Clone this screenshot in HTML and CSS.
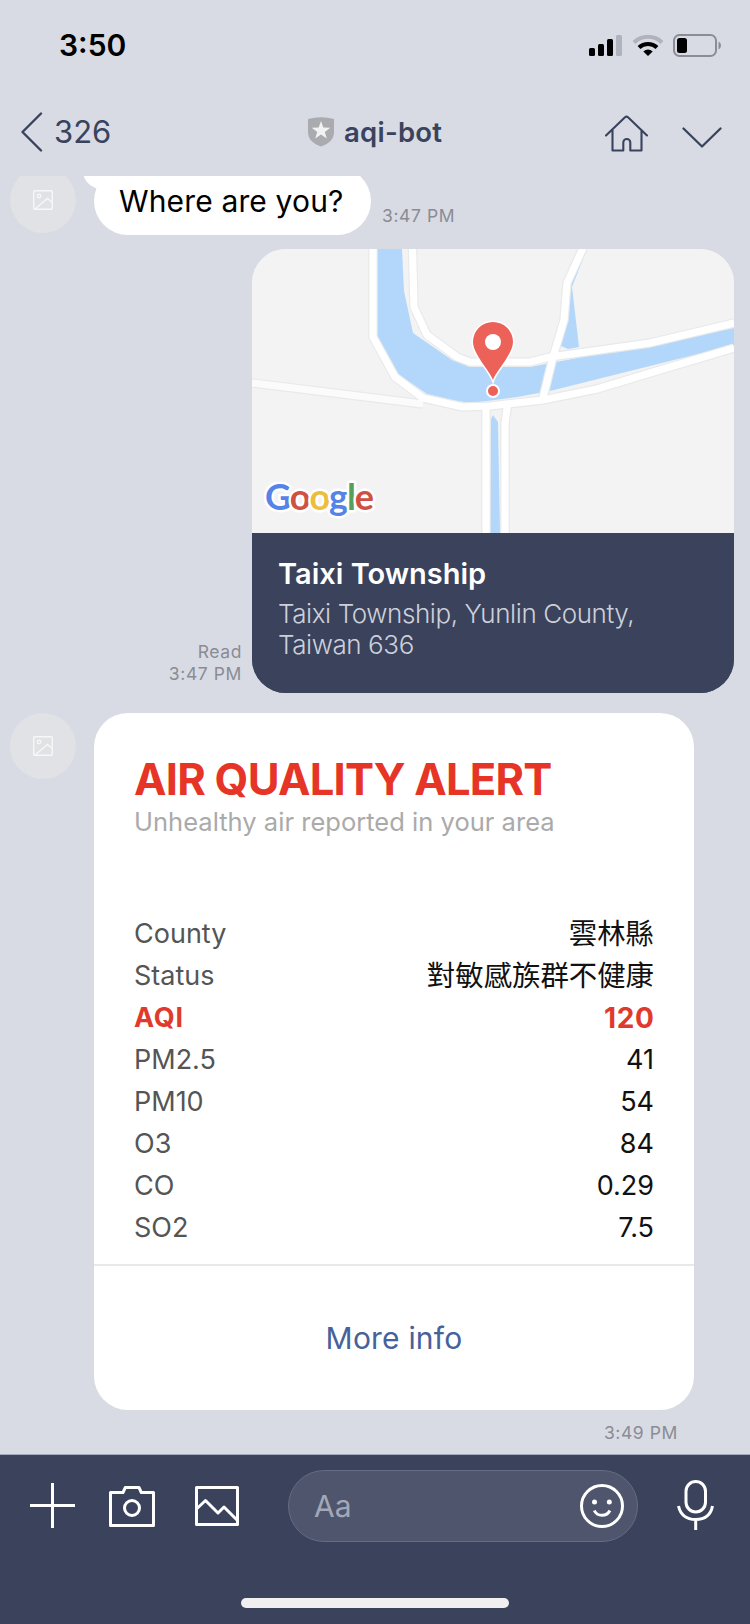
FILE: index.html
```html
<!DOCTYPE html>
<html lang="en">
<head>
<meta charset="utf-8">
<title>aqi-bot</title>
<link rel="stylesheet" href="styles.css">
</head>
<body>
<div class="screen">
  <header class="header">
    <div class="status-bar">
      <div class="clock">3:50</div>
      <div class="indicators">
        <svg class="signal" width="33" height="22" viewBox="0 0 33 22">
          <rect x="0" y="14" width="6" height="8" rx="1.5"/>
          <rect x="9" y="10" width="6" height="12" rx="1.5"/>
          <rect x="18" y="5" width="6" height="17" rx="1.5"/>
          <rect x="27" y="1" width="6" height="21" rx="1.5" fill="#b0b2bd"/>
        </svg>
        <svg class="wifi" width="32" height="22" viewBox="0 0 32 22" fill="none">
          <path d="M2 8.500A20 20 0 0 1 30 8.500" stroke="#b0b2bd" stroke-width="4"/>
          <path d="M7 13.500A13 13 0 0 1 25 13.500" stroke="#000" stroke-width="4"/>
          <path d="M11.300 17.500A7.400 7.400 0 0 1 20.700 17.500L16 22Z" fill="#000"/>
        </svg>
        <svg class="battery" width="49" height="23" viewBox="0 0 49 23">
          <rect x="1" y="1" width="42" height="21" rx="5.5" fill="none" stroke="#8b8d96" stroke-width="2"/>
          <rect x="4" y="4" width="10" height="15" rx="2.5"/>
          <path d="M45.500 7.500q2.500 1 2.500 4t-2.500 4Z" fill="#8b8d96"/>
        </svg>
      </div>
    </div>
    <nav class="nav">
      <div class="back">
        <svg width="22" height="40" viewBox="0 0 22 40" fill="none" stroke="#3a435d" stroke-width="2.400" stroke-linecap="round" stroke-linejoin="round"><path d="M20 1.500 1.500 20 20 38.500"/></svg>
        <span class="unread">326</span>
      </div>
      <div class="title">
        <svg width="26" height="30" viewBox="0 0 26 30"><path d="M0 2Q13-1.500 26 2V15Q26 25 13 29.500Q0 25 0 15Z" fill="#a9abae"/><path d="M13 4 15.300 10.500 22.300 10.700 16.800 14.900 18.800 21.500 13 17.500 7.200 21.500 9.200 14.900 3.700 10.700 10.700 10.500Z" fill="#f1f2f4"/></svg>
        <span class="bot-name">aqi-bot</span>
      </div>
      <div class="actions">
        <svg class="home" width="44" height="38" viewBox="0 0 44 38" fill="none" stroke="#3a435d" stroke-width="2.100" stroke-linecap="round" stroke-linejoin="round"><path d="M1 20.500 20 2.300Q21.500 1 23 2.300L42 20.500M7.500 15V35.500H18.300V27.500A3.500 3.500 0 0 1 25.300 27.500V35.500H36.500V15"/></svg>
        <svg class="expand" width="40" height="21" viewBox="0 0 40 21" fill="none" stroke="#3a435d" stroke-width="2.300" stroke-linecap="round" stroke-linejoin="round"><path d="M1.500 1.500 20 19.500 38.500 1.500"/></svg>
      </div>
    </nav>
  </header>

  <main class="chat">
    <section class="message received first">
      <div class="avatar"><svg width="20" height="20" viewBox="0 0 20 20" fill="none" stroke="#f7f7f8" stroke-width="1.400"><rect x=".7" y=".7" width="18.600" height="18.600" rx="1"/><circle cx="6" cy="6" r="1.700"/><path d="M2 19 14.500 8.500 19 12.500"/></svg></div>
      <div class="bubble">
        <svg class="tail" width="34" height="21" viewBox="0 0 34 21"><path d="M-2 0Q-1 15.500 12.500 20.500H34V0Z" fill="#fff"/></svg>
        <span class="question">Where are you?</span>
      </div>
      <div class="stamp">3:47 PM</div>
    </section>

    <section class="message sent">
      <div class="stamp">Read<br>3:47 PM</div>
      <article class="place">
        <svg class="map" width="482" height="284" viewBox="0 0 482 284">
          <g fill="#b3d7fb">
            <path d="M124 0H150L152 42 161 84 200 111 218 118H278L482 79V96L298 142 265 148 220 154 198 151 175 145 146 125 124 88Z"/>
            <path d="M335 0 320 38 327 98 316 100 309 97 313 75 317 32Z"/>
            <path d="M241 166 246 173 248 284H238L239 170Z"/>
          </g>
          <g fill="none" stroke="#e8e9ea" stroke-width="9.500" stroke-linejoin="round">
            <path d="M0 134 171 155"/><path d="M121 0V88L143 128 171 149 211 158 238 157 291 151 345 140 398 124 482 99"/><path d="M160.500 0 162 58 175 86 205 108 218 113H278L298 108 398 94 482 74"/><path d="M331-1 315 34 312 71 301 108 291 149"/><path d="M234 158V284M255.500 157 253 174V284"/>
          </g>
          <g fill="none" stroke="#fff" stroke-width="7.200" stroke-linejoin="round">
            <path d="M0 134 171 155" stroke="#fbfbfb"/><path d="M121 0V88L143 128 171 149 211 158 238 157 291 151 345 140 398 124 482 99"/><path d="M160.500 0 162 58 175 86 205 108 218 113H278L298 108 398 94 482 74"/><path d="M331-1 315 34 312 71 301 108 291 149"/><path d="M234 157V284M255.500 156 253 174V284"/>
          </g>
          <path d="M241 131C238 122 221 105 221 93A20 20 0 0 1 261 93C261 105 244 122 241 131Z" fill="#ec6158" stroke="#fff" stroke-width="3" paint-order="stroke"/>
          <circle cx="241" cy="93" r="8" fill="#fff"/>
          <circle cx="241" cy="142" r="6" fill="#ec6158" stroke="#fff" stroke-width="2"/>
          <text class="brand" x="13" y="261" textLength="109"><tspan fill="#5683e8">G</tspan><tspan fill="#cf5144">o</tspan><tspan fill="#edbd3f">o</tspan><tspan fill="#5683e8">g</tspan><tspan fill="#579f5c">l</tspan><tspan fill="#cf5144">e</tspan></text>
        </svg>
        <div class="place-info">
          <h2 class="place-name">Taixi Township</h2>
          <p class="place-address">Taixi Township, Yunlin County,<br>Taiwan 636</p>
        </div>
      </article>
    </section>

    <section class="message received alert-row">
      <div class="avatar"><svg width="20" height="20" viewBox="0 0 20 20" fill="none" stroke="#f7f7f8" stroke-width="1.400"><rect x=".7" y=".7" width="18.600" height="18.600" rx="1"/><circle cx="6" cy="6" r="1.700"/><path d="M2 19 14.500 8.500 19 12.500"/></svg></div>
      <div class="alert-column">
        <article class="alert">
          <div class="alert-body">
            <h1 class="alert-title">AIR QUALITY ALERT</h1>
            <p class="alert-subtitle">Unhealthy air reported in your area</p>
            <dl class="readings">
              <div class="reading"><dt>County</dt><dd class="han">雲林縣</dd></div>
              <div class="reading"><dt>Status</dt><dd class="han">對敏感族群不健康</dd></div>
              <div class="reading key"><dt>AQI</dt><dd>120</dd></div>
              <div class="reading"><dt>PM2.5</dt><dd>41</dd></div>
              <div class="reading"><dt>PM10</dt><dd>54</dd></div>
              <div class="reading"><dt>O3</dt><dd>84</dd></div>
              <div class="reading"><dt>CO</dt><dd>0.29</dd></div>
              <div class="reading"><dt>SO2</dt><dd>7.5</dd></div>
            </dl>
          </div>
          <div class="more">More info</div>
        </article>
        <div class="stamp">3:49 PM</div>
      </div>
    </section>
  </main>

  <footer class="composer">
    <div class="tools">
      <svg class="add" width="45" height="45" viewBox="0 0 45 45" fill="none" stroke="#fff" stroke-width="3"><path d="M22.500 0V45M0 22.500H45"/></svg>
      <svg class="camera" width="46" height="41" viewBox="0 0 46 41" fill="none" stroke="#fff" stroke-width="3" stroke-linejoin="round"><path d="M1.500 6.500H14L16.300 1.500H30L32.300 6.500H44.500V39.500H1.500Z"/><circle cx="23" cy="22" r="7.500"/></svg>
      <svg class="picture" width="44" height="40" viewBox="0 0 44 40" fill="none" stroke="#fff" stroke-width="3" stroke-linejoin="round"><path d="M1.500 1.500H42.500V38.500H1.500Z"/><path d="M2 22.500 10.500 14.500 23 27 29 21 42 34"/></svg>
      <div class="field">
        <span class="placeholder">Aa</span>
        <svg width="44" height="44" viewBox="0 0 44 44" fill="none" stroke="#fff" stroke-width="3"><circle cx="22" cy="22" r="20.500"/><circle cx="14.500" cy="18" r="2.500" fill="#fff" stroke="none"/><circle cx="29.300" cy="18" r="2.500" fill="#fff" stroke="none"/><path d="M14.300 26.500Q16.500 31.300 22 31.300T29.900 26.500"/></svg>
      </div>
      <svg class="mic" width="37" height="50" viewBox="0 0 37 50" fill="none" stroke="#fff" stroke-width="3"><rect x="9" y="1.500" width="19.500" height="30.500" rx="9.750"/><path d="M1.500 26Q4.500 39.500 18.700 39.500T35.500 26M18.700 39.500V50"/></svg>
    </div>
    <div class="home-indicator"></div>
  </footer>
</div>
</body>
</html>
```

FILE: styles.css
```css
* { box-sizing: border-box; }
body { margin: 0; font-family: Inter, "Liberation Sans", "Noto Sans CJK TC", sans-serif; }
svg { display: block; flex: none; }
h1, h2, p, dl, dd { margin: 0; }

.screen { width: 750px; height: 1624px; display: flex; flex-direction: column; overflow: hidden; background: #d8dbe4; }

.header { flex: none; height: 176px; }
.status-bar { height: 88px; display: flex; justify-content: space-between; padding: 27px 28px 0 59px; }
.clock { font-size: 30px; line-height: 36px; font-weight: 600; }
.indicators { display: flex; align-items: flex-start; padding-top: 7px; }
.wifi { margin-left: 10px; }
.battery { margin-left: 9px; }

.nav { height: 88px; display: grid; grid-template-columns: 280px 1fr 280px; align-items: center; color: #3a435d; }
.back { display: flex; align-items: center; gap: 11px; padding-left: 21px; }
.unread { font-size: 31px; line-height: 40px; }
.title { display: flex; align-items: center; gap: 10px; padding-left: 28px; }
.bot-name { font-size: 27.5px; line-height: 40px; font-weight: 600; letter-spacing: .25px; white-space: nowrap; }
.actions { display: flex; align-items: center; justify-content: flex-end; gap: 33px; padding-right: 28px; }
.home { margin-top: 4px; }
.expand { margin-top: 10px; }

.chat { flex: 1; min-height: 0; overflow: hidden; }
.message { display: flex; }
.received { padding-left: 10px; }
.avatar { flex: none; width: 66px; height: 66px; border-radius: 50%; display: grid; place-items: center; background: #e1e2e5; }
.stamp { font-size: 17.5px; line-height: 22px; letter-spacing: .6px; color: #8a8c94; }

.first { margin-top: -9px; height: 68px; }
.bubble { position: relative; width: 277px; height: 68px; margin-left: 18px; border-radius: 34px; background: #fff; display: flex; align-items: center; padding-left: 25px; }
.tail { position: absolute; left: -10px; top: 1px; }
.question { font-size: 30px; line-height: 36px; letter-spacing: .15px; white-space: nowrap; }
.first .stamp { align-self: flex-end; margin: 0 0 8px 11px; }

.sent { justify-content: flex-end; margin-top: 14px; padding-right: 16px; }
.sent .stamp { align-self: flex-end; text-align: right; margin: 0 10px 8px 0; }
.place { width: 482px; height: 444px; border-radius: 34px; overflow: hidden; background: linear-gradient(#f3f3f3 50%, #3a425c 50%); }
.map { background: #f3f3f3; }
.brand { font: 700 36px Lato, sans-serif; stroke: #fff; stroke-width: 5px; stroke-linejoin: round; paint-order: stroke; }
.place-info { height: 160px; padding: 23px 26px; background: #3a425c; }
.place-name { font-size: 29px; line-height: 36px; font-weight: 600; color: #fff; }
.place-address { margin-top: 6px; font-size: 26px; line-height: 31px; font-weight: 300; letter-spacing: -.42px; color: #cdd0da; white-space: nowrap; }

.alert-row { margin-top: 20px; }
.alert-column { margin-left: 18px; width: 600px; }
.alert { height: 697px; border-radius: 34px; background: #fff; }
.alert-body { height: 553px; padding: 40px 40px 0; border-bottom: 2px solid #e9e9eb; }
.alert-title { font-size: 43.5px; line-height: 52px; font-weight: 700; letter-spacing: -.74px; color: #e63426; white-space: nowrap; }
.alert-subtitle { margin-top: 1px; font-size: 25.5px; line-height: 32px; letter-spacing: .02px; color: #aaa; white-space: nowrap; }
.readings { margin-top: 75px; font-size: 27px; line-height: 42px; }
.reading { display: flex; justify-content: space-between; height: 42px; color: #111; }
.reading dt { color: #555; }
.reading .han { font-family: "Noto Sans CJK TC", sans-serif; font-size: 28.4px; line-height: 38px; }
.reading.key, .reading.key dt { color: #e03a2c; font-weight: 700; letter-spacing: .7px; }
.reading.key dd { margin-right: -.7px; font-size: 28px; }
.more { padding-top: 54px; text-align: center; font-size: 30px; line-height: 36px; letter-spacing: .2px; color: #47619a; }
.alert-column .stamp { margin-top: 12px; padding-right: 16px; text-align: right; }

.composer { flex: none; height: 170px; border-top: 1px solid #a4aabd; background: #3a425c; }
.tools { height: 87px; display: flex; align-items: center; padding: 15px 36px 0 30px; }
.add { margin-bottom: 1px; }
.camera { margin-left: 34px; }
.picture { margin-left: 40px; }
.field { width: 350px; height: 72px; margin-left: 49px; padding: 0 13px 0 25px; display: flex; align-items: center; justify-content: space-between; border: 1px solid #656c84; border-radius: 36px; background: #4e556c; }
.placeholder { font-size: 30px; line-height: 36px; color: #a3a8b8; }
.mic { margin: 0 0 2px 39px; }
.home-indicator { width: 268px; height: 10px; margin: 56px auto 0; border-radius: 5px; background: #f0f0f0; }
```
